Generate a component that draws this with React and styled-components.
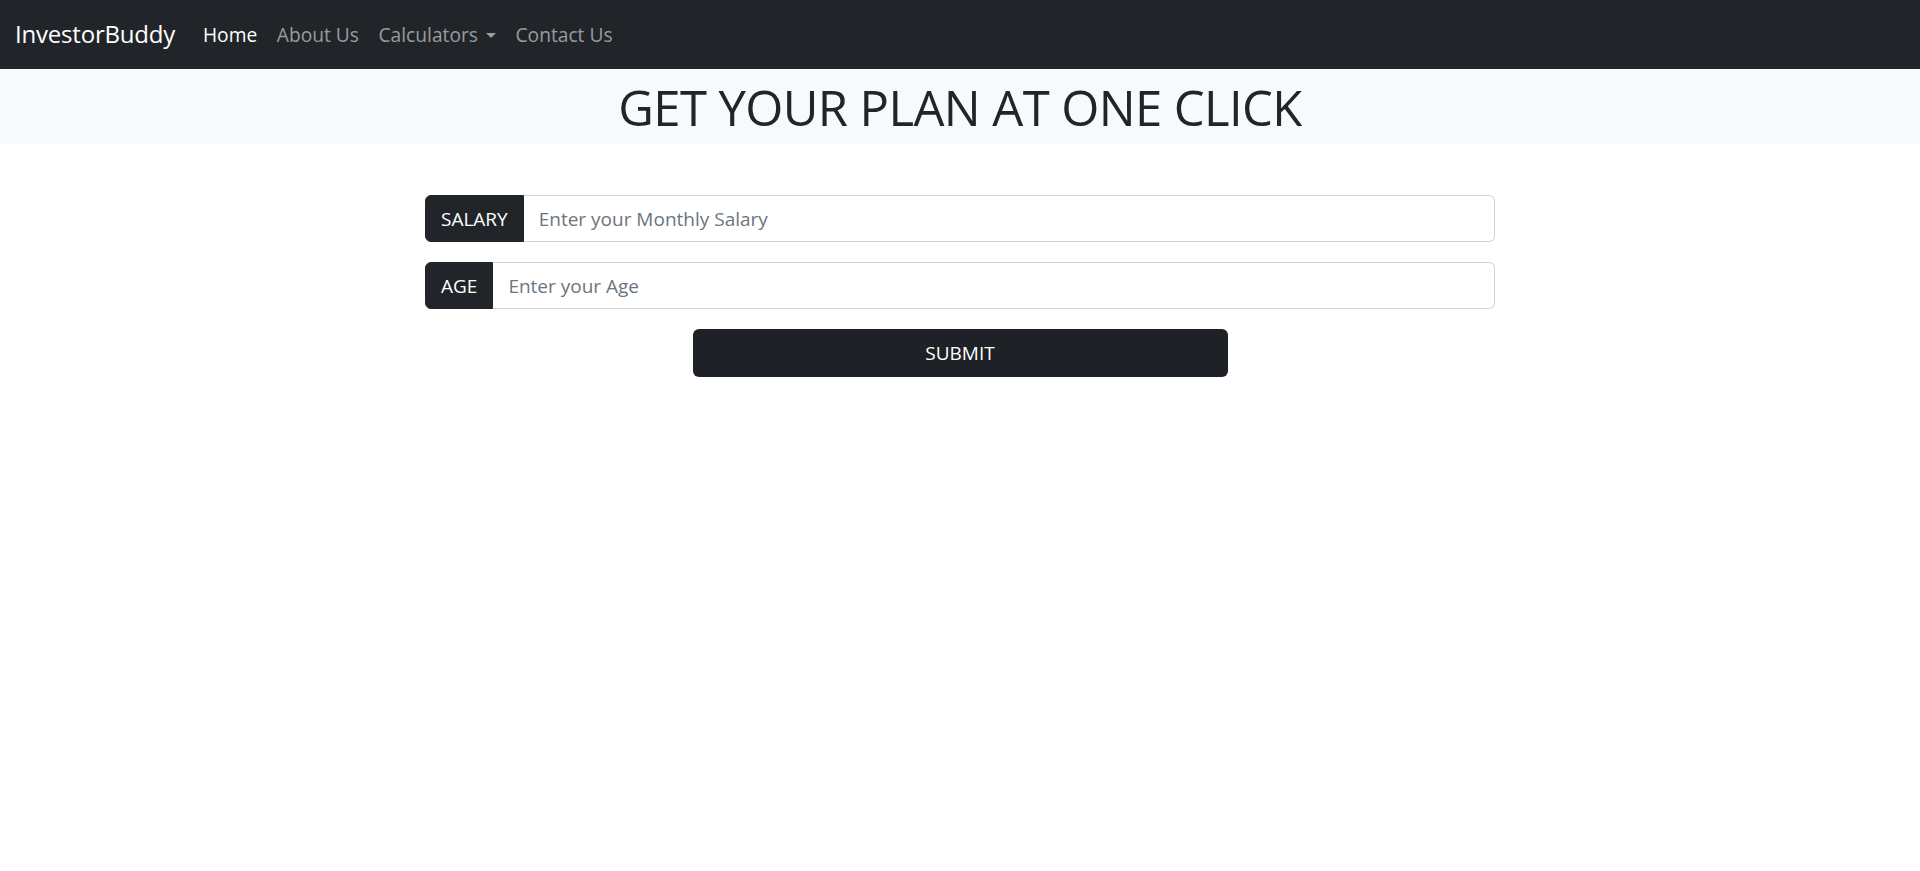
import React from "react";
import styled, { createGlobalStyle } from "styled-components";

const Global = createGlobalStyle`
  html, body { margin: 0; padding: 0; background: #fff; }
  body { font-family: "Open Sans", "Noto Sans", sans-serif; color: #212529; }
  * { box-sizing: border-box; }
`;

const Nav = styled.nav`
  height: 69px;
  background: #212529;
  display: flex;
  align-items: center;
  padding: 0 15px;
`;

const Brand = styled.a`
  font-size: 24px;
  color: #fff;
  text-decoration: none;
  margin-right: 18px;
  letter-spacing: -0.2px;
  padding-bottom: 2px;
`;

const NavList = styled.ul`
  display: flex;
  list-style: none;
  margin: 0;
  padding: 0;
`;

const NavLink = styled.a`
  display: flex;
  align-items: center;
  padding: 0 9.8px;
  font-size: 19.2px;
  color: ${(p) => (p.$active ? "#fff" : "rgba(255,255,255,0.55)")};
  text-decoration: none;
`;

const Caret = styled.span`
  display: inline-block;
  margin-left: 8px;
  width: 0;
  height: 0;
  border-left: 5.5px solid transparent;
  border-right: 5.5px solid transparent;
  border-top: 5.5px solid currentColor;
  margin-top: 1px;
`;

const Banner = styled.header`
  height: 75px;
  background: #f8f9fa;
  display: flex;
  justify-content: center;
  align-items: flex-start;
`;

const Title = styled.h1`
  margin: 0;
  font-size: 49px;
  font-weight: 400;
  line-height: 76px;
  letter-spacing: -0.6px;
  color: #212529;
`;

const Form = styled.form`
  width: 1070px;
  margin: 51px auto 0;
  display: flex;
  flex-direction: column;
  gap: 20px;
`;

const Group = styled.div`
  display: flex;
  height: 47px;
`;

const Addon = styled.span`
  display: flex;
  align-items: center;
  padding: 0 15px;
  font-size: 19px;
  color: #fff;
  background: #212529;
  border: 1px solid #212529;
  border-radius: 6px 0 0 6px;
`;

const Input = styled.input`
  flex: 1;
  min-width: 0;
  padding: 0 15px;
  font-family: inherit;
  font-size: 19px;
  color: #212529;
  border: 1px solid #ced4da;
  border-left: none;
  border-radius: 0 6px 6px 0;
  outline: none;
  background: #fff;
  &::placeholder { color: #6c757d; opacity: 1; }
`;

const Submit = styled.button`
  align-self: center;
  width: 535px;
  height: 48px;
  background: #1e2125;
  color: #fff;
  border: none;
  border-radius: 6px;
  font-family: inherit;
  font-size: 19px;
  cursor: pointer;
`;

export default function App() {
  return (
    <>
      <Global />
      <Nav>
        <Brand href="#">InvestorBuddy</Brand>
        <NavList>
          <li><NavLink $active href="#">Home</NavLink></li>
          <li><NavLink href="#">About Us</NavLink></li>
          <li><NavLink href="#">Calculators<Caret /></NavLink></li>
          <li><NavLink href="#">Contact Us</NavLink></li>
        </NavList>
      </Nav>
      <Banner>
        <Title>GET YOUR PLAN AT ONE CLICK</Title>
      </Banner>
      <Form onSubmit={(e) => e.preventDefault()}>
        <Group>
          <Addon>SALARY</Addon>
          <Input placeholder="Enter your Monthly Salary" />
        </Group>
        <Group>
          <Addon>AGE</Addon>
          <Input placeholder="Enter your Age" />
        </Group>
        <Submit type="submit">SUBMIT</Submit>
      </Form>
    </>
  );
}
